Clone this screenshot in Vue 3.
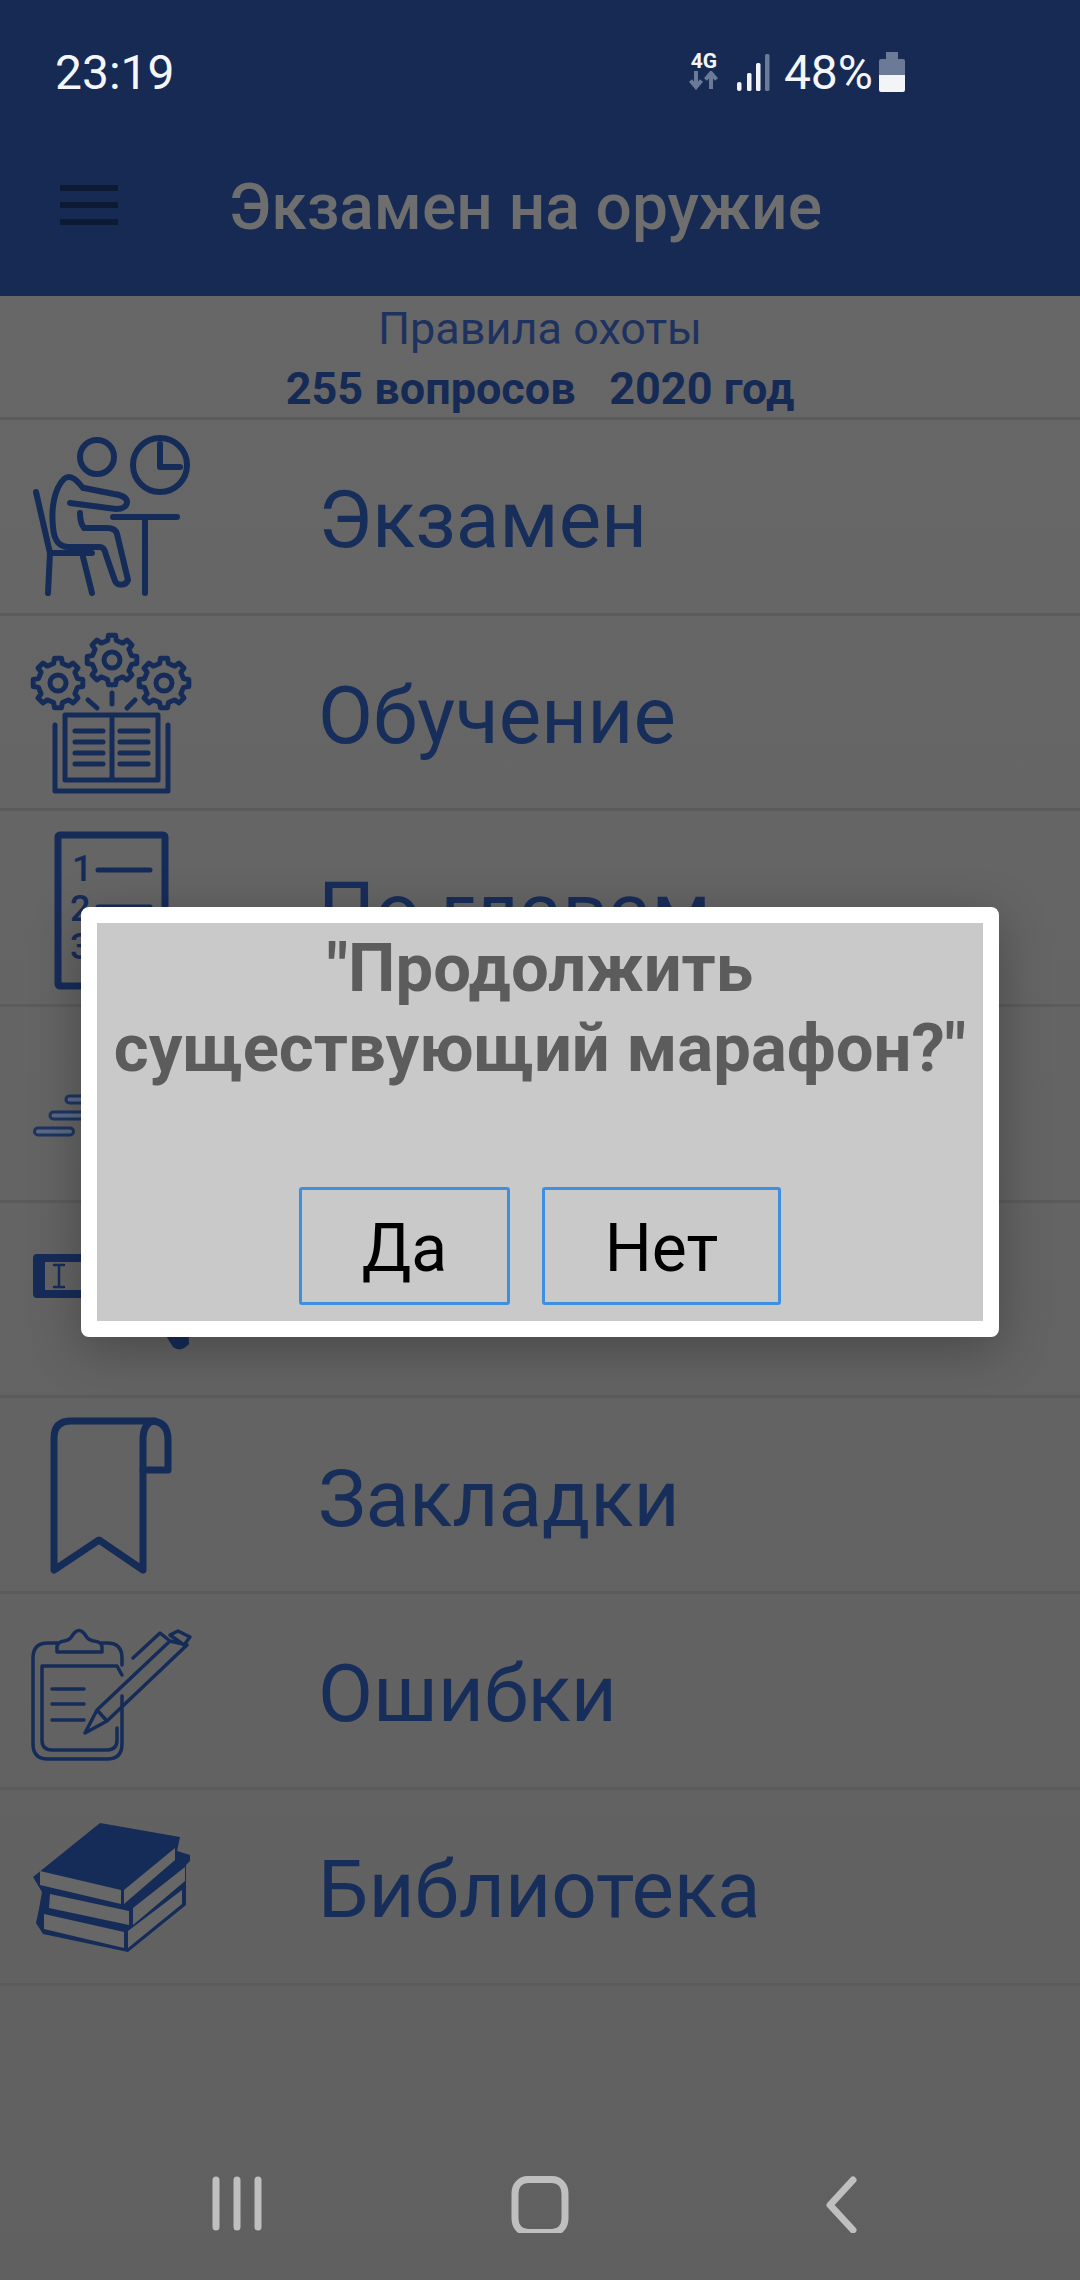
<template>
  <div class="screen">
    <header class="top">
      <div class="status">
        <span class="time">23:19</span>
        <div class="status-right">
          <div class="net">
            <span class="net-label">4G</span>
            <svg width="30" height="19" viewBox="0 0 30 19">
              <path class="net-arrow" d="M7 0v15M1.5 9.5 7 16l5.500-6.500M22 18V3M16.500 8.500 22 2l5.500 6.500" />
            </svg>
          </div>
          <svg class="signal" width="35" height="38" viewBox="0 0 35 38">
            <rect x="0" y="28" width="4.500" height="9" rx="2" fill="#f2f4f8" />
            <rect x="10" y="19" width="4.500" height="18" rx="1.500" fill="#f2f4f8" />
            <rect x="19" y="9" width="4.500" height="28" rx="1.500" fill="#f2f4f8" />
            <rect x="28" y="0" width="4.500" height="37" rx="1.500" fill="#6b7a96" />
          </svg>
          <span class="percent">48%</span>
          <svg class="battery" width="26" height="40" viewBox="0 0 26 40">
            <path d="M7 0h12v7h5a2 2 0 0 1 2 2v14H0V9a2 2 0 0 1 2-2h5z" fill="#6b7a96" />
            <path d="M0 23h26v15a2 2 0 0 1-2 2H2a2 2 0 0 1-2-2z" fill="#f2f4f8" />
          </svg>
        </div>
      </div>
      <div class="toolbar">
        <div class="burger"><i></i><i></i><i></i></div>
        <h1 class="title">Экзамен на оружие</h1>
      </div>
    </header>

    <section class="intro">
      <p class="intro-name">Правила охоты</p>
      <p class="intro-meta">255 вопросов&nbsp;&nbsp; 2020 год</p>
    </section>

    <ul class="menu">
      <li v-for="item in items" :key="item.id" class="row">
        <svg class="icon" width="170" height="170" viewBox="28 12 170 170">
          <g v-if="item.id === 'exam'" class="line" stroke-width="6">
            <circle cx="160" cy="46" r="27" />
            <path d="M160 25v23h20" />
            <circle cx="97" cy="38" r="17" />
            <path d="M83 69C76 60 70 55 64 60 54 70 51 90 53 108c1 14 6 20 16 20h31c3 0 5 3 6 8l9 26c2 5 11 5 13-1l-11-46c-1-4-5-6-10-6H84c-3-4-4-10-4-15" />
            <path d="M70 84l46 6c7 0 11-3 11-7s-5-7-13-8l-30-6" />
            <path d="M113 98h64M145 98v76" />
            <path d="M36 73l14 61-2 40M52 134h40M83 138l9 36" />
          </g>

          <g v-else-if="item.id === 'study'" class="line" stroke-width="5">
            <path v-for="gear in gears" :key="gear" :d="gear" />
            <circle cx="58" cy="68" r="8" />
            <circle cx="112" cy="45" r="8" />
            <circle cx="164" cy="68" r="8" />
            <path d="M112 78v11M88 85l9 8M127 93l8-8" />
            <path d="M65 100h93v65H65zM112 100v65M55 110v66h113v-66" />
            <path d="M75 116h28M75 127h28M75 138h28M75 149h28M120 116h28M120 127h28M120 138h28M120 149h28" />
          </g>

          <g v-else-if="item.id === 'chapters'">
            <rect class="line" stroke-width="7" x="58" y="24" width="107" height="151" rx="2" />
            <text class="num" x="72" y="70">1</text>
            <text class="num" x="70" y="110">2</text>
            <text class="num" x="70" y="148">3</text>
            <path class="line" stroke-width="5" d="M98 59h52M98 96h52" />
          </g>

          <g v-else-if="item.id === 'marathon'" class="pills">
            <rect x="34.5" y="122" width="39" height="7" rx="3.5" />
            <rect x="50" y="106" width="48" height="7" rx="3.5" />
            <rect x="66" y="90" width="48" height="7" rx="3.5" />
          </g>

          <g v-else-if="item.id === 'search'">
            <path class="solid" fill-rule="evenodd" d="M37 52h111v44H37q-4 0-4-4V56q0-4 4-4zM45 60v28h103V60z" />
            <path class="line" stroke-width="2.5" d="M59 63v22M54 63h10M54 85h10" />
            <path class="solid" d="M160 124h28l1 18q-8 9-16 3z" />
          </g>

          <g v-else-if="item.id === 'bookmarks'" class="line" stroke-width="7">
            <path d="M54 172V40q0-17 17-17h80q17 0 17 19v30h-25v100l-44-30-45 30z" />
            <path d="M143 72V42q0-17 11-19" />
          </g>

          <g v-else-if="item.id === 'mistakes'" class="line" stroke-width="3.5">
            <path d="M122 103v48q0 15-15 15H48q-15 0-15-15V65q0-15 15-15h9M102 50h5q15 0 15 15v7" />
            <path d="M57 59v-5q0-5 7-6 6-1 8-5 7-11 14 0 2 4 8 5 8 1 8 6v5z" />
            <path d="M122 82l-5-9H42v74q0 10 10 10h55q10 0 10-10v-12" />
            <path d="M52 96h32M52 111h32M52 127h32" />
            <path d="M85 140l12-23 73-69 17 4-80 76zM97 117l10 11M133 65l27-25 10 8M170 42l8-4 12 6-6 8z" />
          </g>

          <g v-else-if="item.id === 'library'">
            <path class="solid" d="M100 34l80 14-3 14 13 4v6l-4 4v40l-58 47-85-18-7-11 3-14 3-17-9-15z" />
            <path class="page" d="M40 82l81 19v14l-81-19zM124 101l51-42v12l-51 44zM50 105l79 17v14l-80-17zM133 119l52-41v14l-52 44zM44 125l80 18v16l-80-19zM128 142l54-41v14l-54 44z" />
          </g>
        </svg>
        <span v-if="item.label" class="label">{{ item.label }}</span>
      </li>
    </ul>

    <nav class="nav">
      <svg width="60" height="60" viewBox="0 0 60 60">
        <path class="nav-stroke" d="M12 7v47M33 7v47M54 7v47" />
      </svg>
      <svg width="60" height="60" viewBox="0 0 60 60">
        <path class="nav-stroke" d="M18 6.500h24c8 0 13 6 13 14v25c0 8-5 14-13 14H18c-8 0-13-6-13-14v-25c0-8 5-14 13-14z" />
      </svg>
      <svg width="60" height="60" viewBox="0 0 60 60">
        <path class="nav-stroke" d="M37 7 14 32l23 25" stroke-linejoin="round" />
      </svg>
    </nav>

    <div class="dialog">
      <h2 class="dialog-text">"Продолжить<br />существующий марафон?"</h2>
      <div class="dialog-actions">
        <button class="dialog-btn yes">Да</button>
        <button class="dialog-btn no">Нет</button>
      </div>
    </div>
  </div>
</template>

<script setup>
// rows 4 and 5 sit fully behind the dialog, only their icons show
const items = [
  { id: 'exam', label: 'Экзамен' },
  { id: 'study', label: 'Обучение' },
  { id: 'chapters', label: 'По главам' },
  { id: 'marathon', label: '' },
  { id: 'search', label: '' },
  { id: 'bookmarks', label: 'Закладки' },
  { id: 'mistakes', label: 'Ошибки' },
  { id: 'library', label: 'Библиотека' },
]

// cog outline with 8 teeth
function gearPath(cx, cy, inner = 20, outer = 25) {
  const teeth = 8
  const pts = []
  for (let i = 0; i < teeth; i++) {
    const a = (i / teeth) * Math.PI * 2
    const step = (Math.PI * 2) / teeth
    const ring = [
      [inner, a - step * 0.28],
      [outer, a - step * 0.18],
      [outer, a + step * 0.18],
      [inner, a + step * 0.28],
    ]
    ring.forEach(([r, t]) => {
      pts.push(`${(cx + Math.cos(t) * r).toFixed(1)} ${(cy + Math.sin(t) * r).toFixed(1)}`)
    })
  }
  return `M${pts.join('L')}Z`
}

const gears = [gearPath(58, 68), gearPath(112, 45), gearPath(164, 68)]
</script>

<style>
html,
body {
  margin: 0;
  background: #636363;
}
</style>

<style scoped>
.screen {
  position: relative;
  width: 1080px;
  height: 2280px;
  display: flex;
  flex-direction: column;
  overflow: hidden;
  background: linear-gradient(#686868, #606060);
  font-family: 'Roboto', 'Liberation Sans', sans-serif;
}

.top {
  height: 296px;
  background: #162a54;
  flex: none;
}

.status {
  height: 146px;
  display: flex;
  align-items: flex-start;
  padding: 46px 175px 0 55px;
  box-sizing: border-box;
  color: #f4f6fa;
}

.time {
  font-size: 48px;
  line-height: 54px;
}

.status-right {
  margin-left: auto;
  display: flex;
  align-items: flex-start;
  height: 54px;
}

.net {
  width: 30px;
  display: flex;
  flex-direction: column;
  align-items: center;
  margin-top: 5px;
}

.net-label {
  font-size: 21px;
  line-height: 20px;
  font-weight: 700;
}

.net-arrow {
  fill: none;
  stroke: #6b7a96;
  stroke-width: 4;
}

.signal {
  margin: 8px 0 0 18px;
}

.percent {
  font-size: 48px;
  line-height: 54px;
  margin-left: 12px;
}

.battery {
  margin: 6px 0 0 6px;
}

.toolbar {
  height: 150px;
  box-sizing: border-box;
  padding: 0 0 32px 60px;
  display: flex;
  align-items: center;
}

.burger {
  width: 58px;
  display: flex;
  flex-direction: column;
  gap: 11px;
  margin-right: 111px;
}

.burger i {
  display: block;
  height: 6px;
  background: #0d1a33;
}

.title {
  margin: 6px 0 0;
  font-size: 64px;
  line-height: 70px;
  font-weight: 500;
  color: #6e6e6e;
}

.intro {
  height: 121px;
  flex: none;
  text-align: center;
  box-sizing: border-box;
  padding-top: 8px;
}

.intro p {
  margin: 0;
}

.intro-name {
  font-size: 45px;
  line-height: 50px;
  color: #1e3260;
}

.intro .intro-meta {
  font-size: 45px;
  line-height: 50px;
  font-weight: 700;
  margin-top: 10px;
  color: #162a56;
}

.menu {
  list-style: none;
  margin: 0;
  padding: 0;
  border-top: 3px solid #5b5b5b;
}

.row {
  height: 195.7px;
  box-sizing: border-box;
  display: flex;
  align-items: center;
  padding-left: 28px;
  border-bottom: 3px solid #5b5b5b;
}

.icon {
  flex: none;
  margin-right: 120px;
}

.line {
  fill: none;
  stroke: #162c58;
  stroke-linecap: round;
  stroke-linejoin: round;
}

.line path,
.line circle {
  fill: none;
}

.solid {
  fill: #162c58;
}

.page {
  fill: #676767;
}

.num {
  font-family: 'Roboto', sans-serif;
  font-size: 36px;
  font-weight: 500;
  fill: #162c58;
}

.pills rect {
  fill: #5a6a85;
  stroke: #1f3560;
  stroke-width: 3;
}

.label {
  font-size: 80px;
  line-height: 90px;
  color: #172d5a;
  margin-top: 8px;
}

.nav {
  margin-top: auto;
  height: 128px;
  padding-top: 21px;
  box-sizing: border-box;
  display: flex;
  justify-content: center;
  align-items: flex-start;
  gap: 246px;
}

.nav-stroke {
  fill: none;
  stroke: #bfbfbf;
  stroke-width: 7;
  stroke-linecap: round;
}

.dialog {
  position: absolute;
  left: 81px;
  top: 907px;
  width: 918px;
  height: 430px;
  box-sizing: border-box;
  border: 16px solid #fff;
  border-radius: 8px;
  background: #c9c9c9;
  box-shadow: 0 12px 50px rgba(0, 0, 0, 0.28);
  display: flex;
  flex-direction: column;
}

.dialog-text {
  margin: 0;
  padding-top: 5px;
  text-align: center;
  font-size: 67px;
  line-height: 80px;
  font-weight: 700;
  color: #5c5c5c;
}

.dialog-actions {
  margin-top: auto;
  margin-bottom: 16px;
  display: flex;
  justify-content: center;
  gap: 32px;
}

.dialog-btn {
  height: 118px;
  padding: 4px 0 0;
  border: 3.5px solid #3f8fe0;
  border-radius: 3px;
  background: transparent;
  color: #000;
  font-family: inherit;
  font-size: 66px;
}

.yes {
  width: 211px;
}

.no {
  width: 239px;
}
</style>
